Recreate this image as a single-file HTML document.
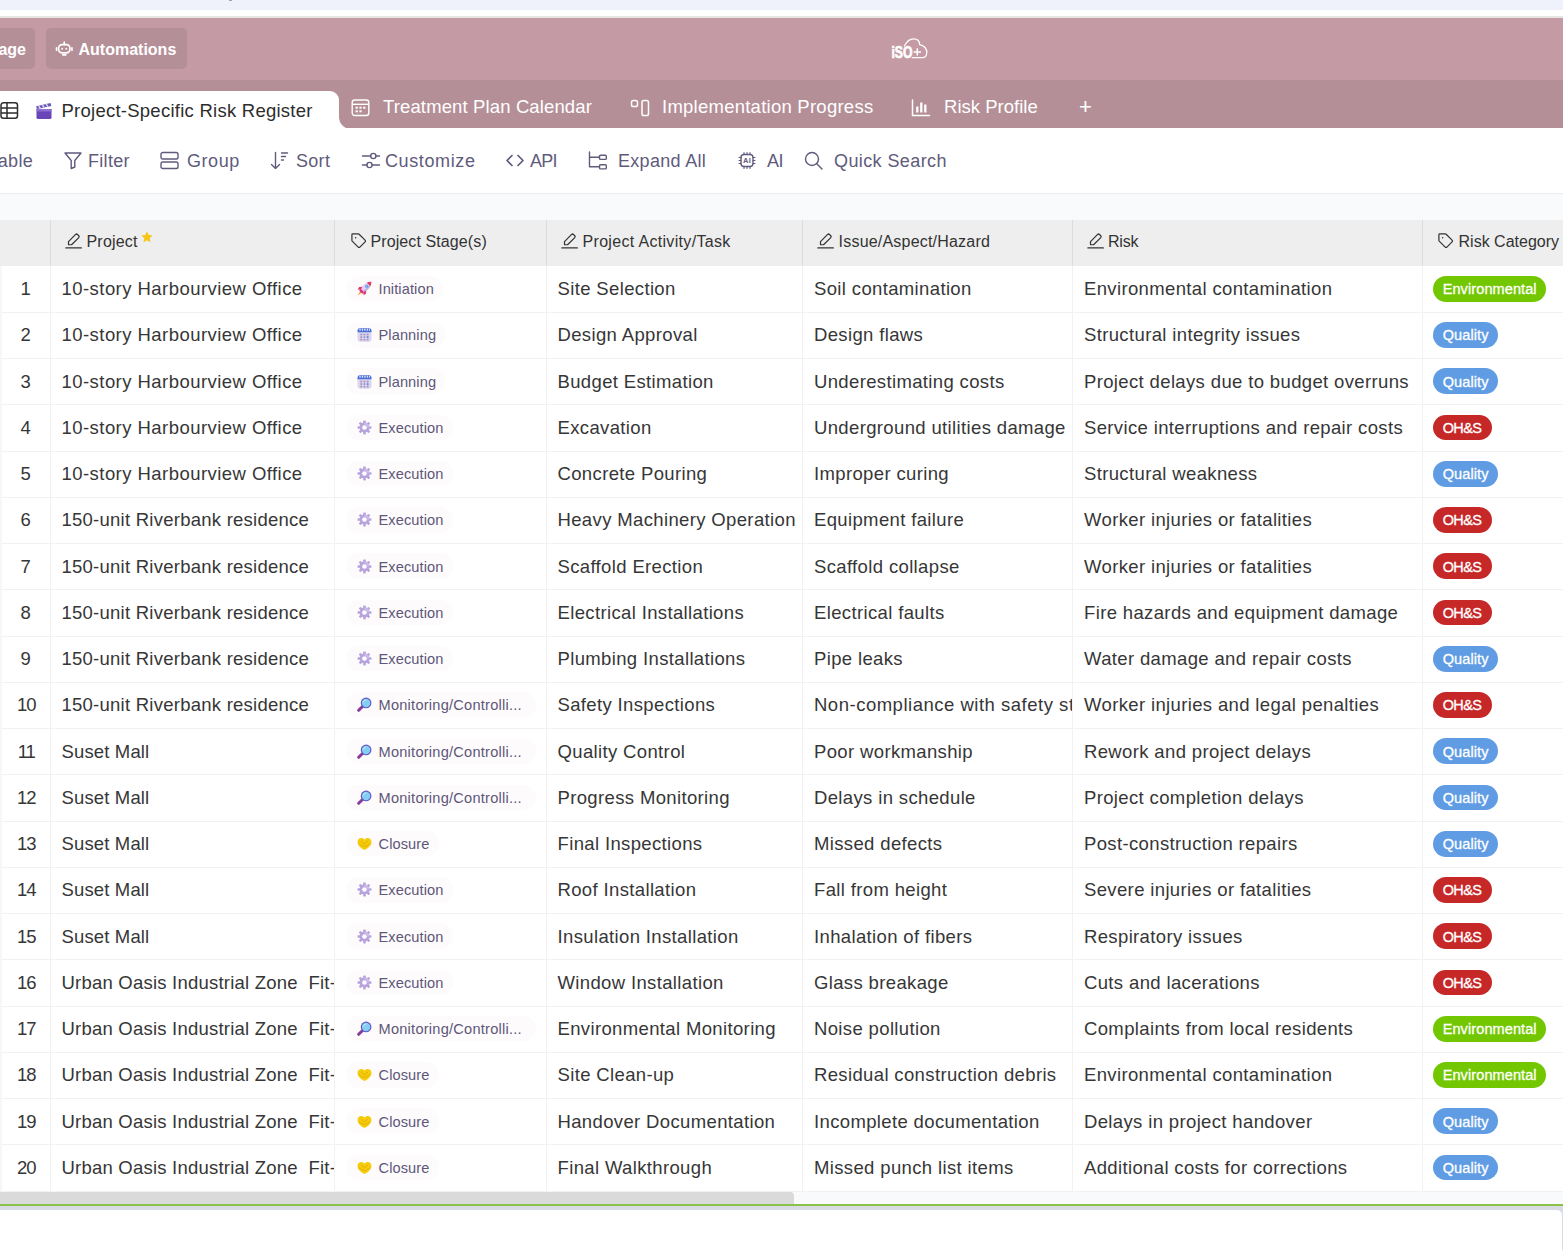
<!DOCTYPE html>
<html lang="en">
<head>
<meta charset="utf-8">
<title>Project-Specific Risk Register</title>
<style>
*{box-sizing:border-box;margin:0;padding:0}
html,body{width:1563px;height:1250px;overflow:hidden;background:#fff}
body{font-family:"Liberation Sans",sans-serif;color:#333;position:relative}
.abs{position:absolute}
/* top strips */
#strip{left:0;top:0;width:1563px;height:9.600px;background:#eff1fb}
#strip i{position:absolute;left:228.500px;top:0;width:3.500px;height:1px;background:#a3a3ad}
#gline{left:0;top:16px;width:1563px;height:2px;background:#e5e6e4}
/* header */
#hdr{left:0;top:18px;width:1563px;height:62px;background:#c49ba5}
.hbtn{position:absolute;top:10px;height:41px;padding-top:2.400px;background:#b58f98;border-radius:5px;color:#fff;font-weight:bold;font-size:16px;display:flex;align-items:center;white-space:nowrap}
#hb1{left:-20px;width:55px;justify-content:flex-end;padding-right:9px}
#hb2{left:46px;width:141px;padding-left:10px}
#hb2 svg{width:18.500px;height:18.500px;margin:-2.500px 5px 0 -1px;flex:none}
#logo{left:889px;top:19px;width:40px;height:24px}
/* tabs */
#tabs{left:0;top:80px;width:1563px;height:48px;background:#b58f98}
#tabact{left:-10px;top:11px;width:349px;height:40px;background:#fff;border-radius:0 9px 0 0}
#tabcurve{left:339px;top:37px;width:12px;height:12px;background:#fff}
#tabcurve i{position:absolute;left:0;top:-12px;width:24px;height:24px;border-radius:50%;background:#b58f98;display:block}
#tabcurve{overflow:hidden}
.tab{position:absolute;top:3px;height:48px;display:flex;align-items:center;color:#fff;font-size:18.500px;white-space:nowrap;letter-spacing:.25px}
.tab svg{flex:none}
#t0{color:#2d2d2d;top:6.700px}
/* toolbar */
#tb{left:0;top:128px;width:1563px;height:66px;background:#fff;border-bottom:1px solid #ececf0}
.ti{position:absolute;top:1.200px;height:65px;display:flex;align-items:center;color:#5f5b7c;font-size:18px;white-space:nowrap;letter-spacing:.3px}
.ti svg{position:relative;top:-1.200px;flex:none;stroke:#5f5b7c;fill:none;stroke-width:1.400;stroke-linecap:round;stroke-linejoin:round}
/* band */
#band{left:0;top:194px;width:1563px;height:26px;background:#f9fafc}
/* table */
#tbl{left:0;top:220px;width:1563px;height:971.500px;background:#fff;overflow:hidden}
.th{position:absolute;top:0;height:45.500px;background:#eeeeee;border-right:1px solid #dcdcdc;display:flex;align-items:center;font-size:16px;color:#333;white-space:nowrap;overflow:hidden;letter-spacing:.2px}
.th>span{position:relative;top:-.8px}
.th .hi{width:17px;height:17px;flex:none;margin-right:3px;position:relative;top:-2px}
.tr{position:relative;height:46.250px;width:1600px}
.tr::after{content:'';position:absolute;left:0;width:1600px;top:46.250px;height:1px;background:#f2f2f2}
.td{position:absolute;top:0;height:46.250px;border-right:1px solid #f2f2f2;display:flex;align-items:center;white-space:nowrap;overflow:hidden;font-size:18.500px;letter-spacing:.45px;color:#363636;padding-left:11px}
.c3,.c4,.c5{letter-spacing:.36px}
.c0,.c1,.c3,.c4,.c5{padding-top:.76px}
.c0{left:0;width:50.500px;border-left:2px solid #f6f7fa;justify-content:center;padding-left:0;letter-spacing:0}
.c0.dd{letter-spacing:-1px;padding-left:1px}
.c1{left:50.500px;width:284px}
.c2{left:334.500px;width:212px}
.c3{left:546.500px;width:256.500px}
.c4{left:803px;width:270px}
.c5{left:1073px;width:349.500px}
.c6{left:1422.500px;width:160px;border-right:0;padding-left:10.500px}
.pill{display:inline-flex;align-items:center;height:25.500px;border-radius:13px;background:#fdfbfc;padding:0 9px 0 11.500px;font-size:14.600px;color:#5d5779;letter-spacing:.1px;margin-left:0}
.pill.mon{letter-spacing:.24px;padding-right:14px}
.pill>span{position:relative;top:.5px}
.pill .em{width:15px;height:15px;margin-right:6.500px;flex:none}
.bdg{display:inline-flex;align-items:center;height:25.600px;border-radius:13px;position:relative;top:.1px;color:#fff;font-size:14.500px;padding:.8px 9.700px 0;letter-spacing:.1px;-webkit-text-stroke:.3px #fff}
.env{background:#73c700}
.qual{background:#5f9ce4}
.ohs{background:#c62828;letter-spacing:-.6px;padding-right:10.300px}
/* bottom */
#sbt{left:0;top:1191.500px;width:1563px;height:12.500px;background:#f9fafc}
#sbth{left:-10px;top:1192px;width:804px;height:12px;background:#dadada;border-radius:0 4px 0 0}
#grn{left:0;top:1204px;width:1563px;height:2.500px;background:#8bc34a}
#btm{left:0;top:1206.400px;width:1563px;height:50px;background:#d8dbe3}
#btm i{position:absolute;display:block;left:-10px;top:3.400px;width:1571.700px;height:60px;background:#fff;border-radius:5px}
</style>
</head>
<body>
<div id="strip" class="abs"><i></i></div>
<div id="gline" class="abs"></div>

<div id="hdr" class="abs">
  <div class="hbtn" id="hb1">age</div>
  <div class="hbtn" id="hb2"><svg viewBox="0 0 18 18" fill="none" stroke="#fff" stroke-width="1.600" stroke-linecap="round"><rect x="3.500" y="5.500" width="11" height="8" rx="3.500"/><path d="M9 5.500V3M1.500 8.500v2.500M16.500 8.500v2.500M7.500 15.500h3"/><circle cx="7" cy="9.500" r=".9" fill="#fff" stroke="none"/><circle cx="11" cy="9.500" r=".9" fill="#fff" stroke="none"/></svg>Automations</div>
  <svg id="logo" class="abs" viewBox="0 0 40 24"><text x="2.400" y="21" font-family="Liberation Sans, sans-serif" font-weight="bold" font-size="16.800" fill="#fff" stroke="#fff" stroke-width=".7" textLength="21" lengthAdjust="spacingAndGlyphs">iSO</text><path d="M15.500 8.800C17 5.800 19.800 1.900 24.500 1.900c4 0 6 2.600 6.200 5.700 4 1 7.100 3.900 7.100 8 0 3.400-2.300 5.100-4.300 5.100H23.300" fill="none" stroke="#fff" stroke-width="1.300" stroke-linecap="round"/><path d="M24.600 14.900h7.400M28.300 11.200v7.400" stroke="#fff" stroke-width="1.500" fill="none"/></svg>
</div>

<div id="tabs" class="abs">
  <div id="tabact" class="abs"></div>
  <div id="tabcurve" class="abs"><i></i></div>
  <div class="tab" id="t0" style="left:0">
    <svg width="19" height="19" viewBox="0 0 19 19" style="margin-left:0" fill="none" stroke="#2d2d2d" stroke-width="1.500"><rect x="1" y="1.800" width="16.500" height="15.500" rx="2.500"/><path d="M1 7h16.500M1 12h16.500M7 1.800v15.500"/></svg>
    <svg width="18" height="18" viewBox="0 0 18 18" style="margin-left:16px;margin-right:8.500px"><path d="M1.500 7h15v8.500a1.500 1.500 0 0 1-1.500 1.500H3a1.500 1.500 0 0 1-1.500-1.500z" fill="#6a45b8"/><path d="M1.200 4.200 15.600 1l.7 2.900L1.900 7.100z" fill="#6b55b5"/><path d="M3.600 3.700l1.600 2.600M7.400 2.800 9 5.500M11.200 2l1.600 2.700" stroke="#d9d0f0" stroke-width="1.500"/><path d="M1.500 7h15v2.500h-15z" fill="#8c6fd0"/></svg>
    <span>Project-Specific Risk Register</span>
  </div>
  <div class="tab" style="left:351px">
    <svg width="19" height="19" viewBox="0 0 19 19" fill="none" stroke="#fff" stroke-width="1.400" style="margin-right:13px"><rect x="1.200" y="2" width="16.600" height="15.500" rx="2.500"/><path d="M1.200 6.300h16.600"/><g fill="#fff" stroke="none"><rect x="4.600" y="8.700" width="2.200" height="2"/><rect x="8.400" y="8.700" width="2.200" height="2"/><rect x="12.200" y="8.700" width="2.200" height="2"/><rect x="4.600" y="12.300" width="2.200" height="2"/><rect x="8.400" y="12.300" width="2.200" height="2"/></g></svg>
    <span style="letter-spacing:.13px">Treatment Plan Calendar</span>
  </div>
  <div class="tab" style="left:630px">
    <svg width="20" height="19" viewBox="0 0 20 19" fill="none" stroke="#fff" stroke-width="1.500" style="margin-right:12px"><rect x="1.500" y="2.500" width="6" height="6" rx="1.800"/><rect x="12" y="2.500" width="6.500" height="15" rx="1.800"/></svg>
    <span>Implementation Progress</span>
  </div>
  <div class="tab" style="left:911px">
    <svg width="20" height="19" viewBox="0 0 20 19" fill="none" stroke="#fff" stroke-width="1.500" stroke-linecap="round" style="margin-right:13px"><path d="M1.500 2v15.500h17"/><path d="M6.300 14.500V8.500M10.300 14.500V4.500M14.300 14.500V6.500" stroke-width="2.300" stroke-linecap="butt"/></svg>
    <span style="letter-spacing:.02px">Risk Profile</span>
  </div>
  <div class="tab" style="left:1079px;font-size:22px"><span>+</span></div>
</div>

<div id="tb" class="abs">
  <div class="ti" style="left:-11.500px"><span>Table</span></div>
  <div class="ti" style="left:64px"><svg width="18" height="19" viewBox="0 0 18 19" style="margin-right:6px"><path d="M1 2h16l-6.200 7.500v6.500l-3.600 1.500V9.500z"/></svg><span>Filter</span></div>
  <div class="ti" style="left:160px"><svg width="19" height="19" viewBox="0 0 19 19" style="margin-right:8px"><rect x="1" y="1.500" width="17" height="6.500" rx="1.800"/><rect x="1" y="11" width="17" height="6.500" rx="1.800"/></svg><span style="letter-spacing:.55px">Group</span></div>
  <div class="ti" style="left:270px"><svg width="19" height="19" viewBox="0 0 19 19" style="margin-right:7px"><path d="M5.500 1.500v16M1.500 13.500l4 4 4-4M11.500 2h6M11.500 5.500h4M11.500 9h2"/></svg><span>Sort</span></div>
  <div class="ti" style="left:361px"><svg width="20" height="19" viewBox="0 0 20 19" style="margin-right:4px"><path d="M1.500 5h8M15 5h3.500M1.500 14h4.500M11 14h7.500"/><circle cx="12.300" cy="5" r="2.600"/><circle cx="8.500" cy="14" r="2.600"/></svg><span style="letter-spacing:.62px">Customize</span></div>
  <div class="ti" style="left:505px"><svg width="20" height="19" viewBox="0 0 20 19" style="margin-right:5px"><path d="M7 4.500 2 9.500l5 5M13 4.500l5 5-5 5" stroke-width="1.700"/></svg><span style="letter-spacing:-.8px">API</span></div>
  <div class="ti" style="left:588px"><svg width="20" height="19" viewBox="0 0 20 19" style="margin-right:10px"><path d="M1.500 1v14.800h10M1.500 6.300h10"/><rect x="11.500" y="4.200" width="6.800" height="4.200" rx="1"/><rect x="11.500" y="13.700" width="6.800" height="4.200" rx="1"/></svg><span>Expand All</span></div>
  <div class="ti" style="left:738px"><svg width="18" height="19" viewBox="0 0 18 19" style="margin-right:11px"><rect x="3" y="3.500" width="12" height="12" rx="3"/><path d="M6 1.500v2M9 1.500v2M12 1.500v2M6 15.500v2M9 15.500v2M12 15.500v2M1 6.500h2M1 9.500h2M1 12.500h2M15 6.500h2M15 9.500h2M15 12.500h2" stroke-width="1.100"/><text x="9" y="12.200" text-anchor="middle" font-family="Liberation Sans, sans-serif" font-size="7.500" font-weight="bold" fill="#5f5b7c" stroke="none">AI</text></svg><span style="letter-spacing:-.5px">AI</span></div>
  <div class="ti" style="left:804px"><svg width="19" height="19" viewBox="0 0 19 19" style="margin-right:11px"><circle cx="8" cy="8" r="6.500"/><path d="M13 13l5 5"/></svg><span style="letter-spacing:.4px">Quick Search</span></div>
</div>

<div id="band" class="abs"></div>

<div id="tbl" class="abs">
  <div class="th" style="left:0;width:50.500px"></div>
  <div class="th" style="left:50.500px;width:284px;padding-left:14.500px"><svg class="hi" viewBox="0 0 16 16" fill="none" stroke="#333" stroke-width="1.150" stroke-linejoin="round" stroke-linecap="round"><path d="M10 2.300a1.250 1.250 0 0 1 1.750 0l1.200 1.200a1.250 1.250 0 0 1 0 1.750L6.200 12H3.300V9.100z"/><path d="M.8 15h14.600"/></svg><span style="margin-left:1.500px">Project</span><svg viewBox="0 0 12 12" width="12" height="12" style="margin:-12px 0 0 3px"><path d="M6 .5l1.700 3.600 3.900.5-2.900 2.700.8 3.900L6 9.300 2.500 11.200l.8-3.900L.4 4.600l3.900-.5z" fill="#f5c518"/></svg></div>
  <div class="th" style="left:334.500px;width:212px;padding-left:15px"><svg class="hi" viewBox="0 0 16 16" fill="none" stroke="#333" stroke-width="1.150" stroke-linejoin="round" stroke-linecap="round"><path d="M1.800 2.600a.8.800 0 0 1 .8-.8h5.200c.3 0 .6.100.8.300l5.600 5.600a1.100 1.100 0 0 1 0 1.600l-4.900 4.900a1.100 1.100 0 0 1-1.600 0L2.100 8.600a1.100 1.100 0 0 1-.3-.8z"/><circle cx="5.300" cy="5.300" r=".7" fill="#333" stroke="none"/></svg><span style="margin-left:1px;letter-spacing:.1px">Project Stage(s)</span></div>
  <div class="th" style="left:546.500px;width:256.500px;padding-left:14px"><svg class="hi" viewBox="0 0 16 16" fill="none" stroke="#333" stroke-width="1.150" stroke-linejoin="round" stroke-linecap="round"><path d="M10 2.300a1.250 1.250 0 0 1 1.750 0l1.200 1.200a1.250 1.250 0 0 1 0 1.750L6.200 12H3.300V9.100z"/><path d="M.8 15h14.600"/></svg><span style="margin-left:2px;letter-spacing:.32px">Project Activity/Task</span></div>
  <div class="th" style="left:803px;width:270px;padding-left:14px"><svg class="hi" viewBox="0 0 16 16" fill="none" stroke="#333" stroke-width="1.150" stroke-linejoin="round" stroke-linecap="round"><path d="M10 2.300a1.250 1.250 0 0 1 1.750 0l1.200 1.200a1.250 1.250 0 0 1 0 1.750L6.200 12H3.300V9.100z"/><path d="M.8 15h14.600"/></svg><span style="margin-left:1.600px">Issue/Aspect/Hazard</span></div>
  <div class="th" style="left:1073px;width:349.500px;padding-left:14px"><svg class="hi" viewBox="0 0 16 16" fill="none" stroke="#333" stroke-width="1.150" stroke-linejoin="round" stroke-linecap="round"><path d="M10 2.300a1.250 1.250 0 0 1 1.750 0l1.200 1.200a1.250 1.250 0 0 1 0 1.750L6.200 12H3.300V9.100z"/><path d="M.8 15h14.600"/></svg><span style="margin-left:1px;letter-spacing:-.2px">Risk</span></div>
  <div class="th" style="left:1422.500px;width:160px;padding-left:14px;border-right:0"><svg class="hi" viewBox="0 0 16 16" fill="none" stroke="#333" stroke-width="1.150" stroke-linejoin="round" stroke-linecap="round"><path d="M1.800 2.600a.8.800 0 0 1 .8-.8h5.200c.3 0 .6.100.8.300l5.600 5.600a1.100 1.100 0 0 1 0 1.600l-4.900 4.900a1.100 1.100 0 0 1-1.600 0L2.100 8.600a1.100 1.100 0 0 1-.3-.8z"/><circle cx="5.300" cy="5.300" r=".7" fill="#333" stroke="none"/></svg><span style="margin-left:2px;letter-spacing:.01px">Risk Category</span></div>
  <div style="position:absolute;left:0;top:45.500px;width:1600px">
<div class="tr"><div class="td c0">1</div><div class="td c1"><span>10-story Harbourview Office</span></div><div class="td c2"><span class="pill"><svg class="em" viewBox="0 0 16 16"><path d="M3.400 11 .6 15.400l4.400-2.800z" fill="#f5a21c"/><path d="M4.200 8.300 7.700 11.800 5.600 13.700 2.300 10.400z" fill="#d9307a"/><path d="M15.200.8C11.200.6 6.700 3.300 4.200 8.300l3.500 3.500c5-2.500 7.700-7 7.500-11z" fill="#dcd2ee"/><path d="M15.200.8c.2 4-2.500 8.500-7.500 11l-1.300-1.300C11 8 13.900 4.600 15.200.8z" fill="#bfaede"/><path d="M15.200.8c-1.600-.1-3.200.3-4.700 1l3.700 3.700c.7-1.500 1.100-3.100 1-4.700z" fill="#e6395f"/><circle cx="10.400" cy="5.600" r="1.600" fill="#5b8def"/><circle cx="10.400" cy="5.600" r=".8" fill="#a9c6fa"/><path d="M5.700 6 2.300 6.500.7 9l3.500.3zM10 10.300 9.500 13.700 7 15.300 6.700 11.800z" fill="#e0357a"/></svg><span>Initiation</span></span></div><div class="td c3"><span>Site Selection</span></div><div class="td c4"><span>Soil contamination</span></div><div class="td c5"><span>Environmental contamination</span></div><div class="td c6"><span class="bdg env">Environmental</span></div></div>
<div class="tr"><div class="td c0">2</div><div class="td c1"><span>10-story Harbourview Office</span></div><div class="td c2"><span class="pill"><svg class="em" viewBox="0 0 16 16"><rect x=".6" y="1.200" width="14.800" height="14.400" rx="2.600" fill="#ddd5ee"/><path d="M.6 3.800a2.600 2.600 0 0 1 2.600-2.600h9.600a2.600 2.600 0 0 1 2.600 2.600v1.900H.6z" fill="#4b6fd9"/><g fill="#dfe6fb"><rect x="2.600" y="1.700" width="1.300" height="2.400" rx=".6"/><rect x="5.200" y="1.700" width="1.300" height="2.400" rx=".6"/><rect x="7.800" y="1.700" width="1.300" height="2.400" rx=".6"/><rect x="10.400" y="1.700" width="1.300" height="2.400" rx=".6"/><rect x="12.700" y="1.700" width="1.100" height="2.400" rx=".5"/></g><g fill="#9b8fb8"><rect x="3.600" y="7.200" width="1.900" height="1.700"/><rect x="7" y="7.200" width="1.900" height="1.700"/><rect x="10.400" y="7.200" width="1.900" height="1.700"/><rect x="3.600" y="9.900" width="1.900" height="1.700"/><rect x="7" y="9.900" width="1.900" height="1.700"/><rect x="3.600" y="12.600" width="1.900" height="1.700"/><rect x="7" y="12.600" width="1.900" height="1.700"/><rect x="10.400" y="12.600" width="1.900" height="1.700"/></g><rect x="10.400" y="9.900" width="1.900" height="1.700" fill="#4b7cf0"/></svg><span>Planning</span></span></div><div class="td c3"><span>Design Approval</span></div><div class="td c4"><span>Design flaws</span></div><div class="td c5"><span>Structural integrity issues</span></div><div class="td c6"><span class="bdg qual">Quality</span></div></div>
<div class="tr"><div class="td c0">3</div><div class="td c1"><span>10-story Harbourview Office</span></div><div class="td c2"><span class="pill"><svg class="em" viewBox="0 0 16 16"><rect x=".6" y="1.200" width="14.800" height="14.400" rx="2.600" fill="#ddd5ee"/><path d="M.6 3.800a2.600 2.600 0 0 1 2.600-2.600h9.600a2.600 2.600 0 0 1 2.600 2.600v1.900H.6z" fill="#4b6fd9"/><g fill="#dfe6fb"><rect x="2.600" y="1.700" width="1.300" height="2.400" rx=".6"/><rect x="5.200" y="1.700" width="1.300" height="2.400" rx=".6"/><rect x="7.800" y="1.700" width="1.300" height="2.400" rx=".6"/><rect x="10.400" y="1.700" width="1.300" height="2.400" rx=".6"/><rect x="12.700" y="1.700" width="1.100" height="2.400" rx=".5"/></g><g fill="#9b8fb8"><rect x="3.600" y="7.200" width="1.900" height="1.700"/><rect x="7" y="7.200" width="1.900" height="1.700"/><rect x="10.400" y="7.200" width="1.900" height="1.700"/><rect x="3.600" y="9.900" width="1.900" height="1.700"/><rect x="7" y="9.900" width="1.900" height="1.700"/><rect x="3.600" y="12.600" width="1.900" height="1.700"/><rect x="7" y="12.600" width="1.900" height="1.700"/><rect x="10.400" y="12.600" width="1.900" height="1.700"/></g><rect x="10.400" y="9.900" width="1.900" height="1.700" fill="#4b7cf0"/></svg><span>Planning</span></span></div><div class="td c3"><span>Budget Estimation</span></div><div class="td c4"><span>Underestimating costs</span></div><div class="td c5"><span>Project delays due to budget overruns</span></div><div class="td c6"><span class="bdg qual">Quality</span></div></div>
<div class="tr"><div class="td c0">4</div><div class="td c1"><span>10-story Harbourview Office</span></div><div class="td c2"><span class="pill"><svg class="em" viewBox="0 0 16 16"><g fill="#b8a3dd"><rect x="6.600" y=".6" width="2.800" height="14.800" rx=".7"/><rect x="6.600" y=".6" width="2.800" height="14.800" rx=".7" transform="rotate(45 8 8)"/><rect x="6.600" y=".6" width="2.800" height="14.800" rx=".7" transform="rotate(90 8 8)"/><rect x="6.600" y=".6" width="2.800" height="14.800" rx=".7" transform="rotate(135 8 8)"/><circle cx="8" cy="8" r="5.300"/></g><circle cx="8" cy="8" r="2.500" fill="#fff"/><path d="M8 2.700a5.300 5.300 0 0 1 5.300 5.300h-2.800A2.500 2.500 0 0 0 8 5.500z" fill="#cbbbe8"/></svg><span>Execution</span></span></div><div class="td c3"><span>Excavation</span></div><div class="td c4"><span>Underground utilities damage</span></div><div class="td c5"><span>Service interruptions and repair costs</span></div><div class="td c6"><span class="bdg ohs">OH&amp;S</span></div></div>
<div class="tr"><div class="td c0">5</div><div class="td c1"><span>10-story Harbourview Office</span></div><div class="td c2"><span class="pill"><svg class="em" viewBox="0 0 16 16"><g fill="#b8a3dd"><rect x="6.600" y=".6" width="2.800" height="14.800" rx=".7"/><rect x="6.600" y=".6" width="2.800" height="14.800" rx=".7" transform="rotate(45 8 8)"/><rect x="6.600" y=".6" width="2.800" height="14.800" rx=".7" transform="rotate(90 8 8)"/><rect x="6.600" y=".6" width="2.800" height="14.800" rx=".7" transform="rotate(135 8 8)"/><circle cx="8" cy="8" r="5.300"/></g><circle cx="8" cy="8" r="2.500" fill="#fff"/><path d="M8 2.700a5.300 5.300 0 0 1 5.300 5.300h-2.800A2.500 2.500 0 0 0 8 5.500z" fill="#cbbbe8"/></svg><span>Execution</span></span></div><div class="td c3"><span>Concrete Pouring</span></div><div class="td c4"><span>Improper curing</span></div><div class="td c5"><span>Structural weakness</span></div><div class="td c6"><span class="bdg qual">Quality</span></div></div>
<div class="tr"><div class="td c0">6</div><div class="td c1"><span style="letter-spacing:.25px">150-unit Riverbank residence</span></div><div class="td c2"><span class="pill"><svg class="em" viewBox="0 0 16 16"><g fill="#b8a3dd"><rect x="6.600" y=".6" width="2.800" height="14.800" rx=".7"/><rect x="6.600" y=".6" width="2.800" height="14.800" rx=".7" transform="rotate(45 8 8)"/><rect x="6.600" y=".6" width="2.800" height="14.800" rx=".7" transform="rotate(90 8 8)"/><rect x="6.600" y=".6" width="2.800" height="14.800" rx=".7" transform="rotate(135 8 8)"/><circle cx="8" cy="8" r="5.300"/></g><circle cx="8" cy="8" r="2.500" fill="#fff"/><path d="M8 2.700a5.300 5.300 0 0 1 5.300 5.300h-2.800A2.500 2.500 0 0 0 8 5.500z" fill="#cbbbe8"/></svg><span>Execution</span></span></div><div class="td c3"><span>Heavy Machinery Operation</span></div><div class="td c4"><span>Equipment failure</span></div><div class="td c5"><span>Worker injuries or fatalities</span></div><div class="td c6"><span class="bdg ohs">OH&amp;S</span></div></div>
<div class="tr"><div class="td c0">7</div><div class="td c1"><span style="letter-spacing:.25px">150-unit Riverbank residence</span></div><div class="td c2"><span class="pill"><svg class="em" viewBox="0 0 16 16"><g fill="#b8a3dd"><rect x="6.600" y=".6" width="2.800" height="14.800" rx=".7"/><rect x="6.600" y=".6" width="2.800" height="14.800" rx=".7" transform="rotate(45 8 8)"/><rect x="6.600" y=".6" width="2.800" height="14.800" rx=".7" transform="rotate(90 8 8)"/><rect x="6.600" y=".6" width="2.800" height="14.800" rx=".7" transform="rotate(135 8 8)"/><circle cx="8" cy="8" r="5.300"/></g><circle cx="8" cy="8" r="2.500" fill="#fff"/><path d="M8 2.700a5.300 5.300 0 0 1 5.300 5.300h-2.800A2.500 2.500 0 0 0 8 5.500z" fill="#cbbbe8"/></svg><span>Execution</span></span></div><div class="td c3"><span>Scaffold Erection</span></div><div class="td c4"><span>Scaffold collapse</span></div><div class="td c5"><span>Worker injuries or fatalities</span></div><div class="td c6"><span class="bdg ohs">OH&amp;S</span></div></div>
<div class="tr"><div class="td c0">8</div><div class="td c1"><span style="letter-spacing:.25px">150-unit Riverbank residence</span></div><div class="td c2"><span class="pill"><svg class="em" viewBox="0 0 16 16"><g fill="#b8a3dd"><rect x="6.600" y=".6" width="2.800" height="14.800" rx=".7"/><rect x="6.600" y=".6" width="2.800" height="14.800" rx=".7" transform="rotate(45 8 8)"/><rect x="6.600" y=".6" width="2.800" height="14.800" rx=".7" transform="rotate(90 8 8)"/><rect x="6.600" y=".6" width="2.800" height="14.800" rx=".7" transform="rotate(135 8 8)"/><circle cx="8" cy="8" r="5.300"/></g><circle cx="8" cy="8" r="2.500" fill="#fff"/><path d="M8 2.700a5.300 5.300 0 0 1 5.300 5.300h-2.800A2.500 2.500 0 0 0 8 5.500z" fill="#cbbbe8"/></svg><span>Execution</span></span></div><div class="td c3"><span>Electrical Installations</span></div><div class="td c4"><span>Electrical faults</span></div><div class="td c5"><span>Fire hazards and equipment damage</span></div><div class="td c6"><span class="bdg ohs">OH&amp;S</span></div></div>
<div class="tr"><div class="td c0">9</div><div class="td c1"><span style="letter-spacing:.25px">150-unit Riverbank residence</span></div><div class="td c2"><span class="pill"><svg class="em" viewBox="0 0 16 16"><g fill="#b8a3dd"><rect x="6.600" y=".6" width="2.800" height="14.800" rx=".7"/><rect x="6.600" y=".6" width="2.800" height="14.800" rx=".7" transform="rotate(45 8 8)"/><rect x="6.600" y=".6" width="2.800" height="14.800" rx=".7" transform="rotate(90 8 8)"/><rect x="6.600" y=".6" width="2.800" height="14.800" rx=".7" transform="rotate(135 8 8)"/><circle cx="8" cy="8" r="5.300"/></g><circle cx="8" cy="8" r="2.500" fill="#fff"/><path d="M8 2.700a5.300 5.300 0 0 1 5.300 5.300h-2.800A2.500 2.500 0 0 0 8 5.500z" fill="#cbbbe8"/></svg><span>Execution</span></span></div><div class="td c3"><span>Plumbing Installations</span></div><div class="td c4"><span>Pipe leaks</span></div><div class="td c5"><span>Water damage and repair costs</span></div><div class="td c6"><span class="bdg qual">Quality</span></div></div>
<div class="tr"><div class="td c0 dd">10</div><div class="td c1"><span style="letter-spacing:.25px">150-unit Riverbank residence</span></div><div class="td c2"><span class="pill mon"><svg class="em" viewBox="0 0 16 16"><path d="M5.600 10.400 1.800 14.200" stroke="#8a3a9c" stroke-width="3.200" stroke-linecap="round"/><circle cx="9.700" cy="6.300" r="5.700" fill="#5f57c4"/><circle cx="9.700" cy="6.300" r="4.500" fill="#86cdf3"/><path d="M6.600 5.500a3.300 3.300 0 0 1 2.800-2.400" stroke="#c6e9fb" stroke-width="1" fill="none" stroke-linecap="round"/></svg><span>Monitoring/Controlli...</span></span></div><div class="td c3"><span>Safety Inspections</span></div><div class="td c4"><span style="letter-spacing:.51px">Non-compliance with safety standards</span></div><div class="td c5"><span>Worker injuries and legal penalties</span></div><div class="td c6"><span class="bdg ohs">OH&amp;S</span></div></div>
<div class="tr"><div class="td c0 dd">11</div><div class="td c1"><span style="letter-spacing:.15px">Suset Mall</span></div><div class="td c2"><span class="pill mon"><svg class="em" viewBox="0 0 16 16"><path d="M5.600 10.400 1.800 14.200" stroke="#8a3a9c" stroke-width="3.200" stroke-linecap="round"/><circle cx="9.700" cy="6.300" r="5.700" fill="#5f57c4"/><circle cx="9.700" cy="6.300" r="4.500" fill="#86cdf3"/><path d="M6.600 5.500a3.300 3.300 0 0 1 2.800-2.400" stroke="#c6e9fb" stroke-width="1" fill="none" stroke-linecap="round"/></svg><span>Monitoring/Controlli...</span></span></div><div class="td c3"><span>Quality Control</span></div><div class="td c4"><span>Poor workmanship</span></div><div class="td c5"><span>Rework and project delays</span></div><div class="td c6"><span class="bdg qual">Quality</span></div></div>
<div class="tr"><div class="td c0 dd">12</div><div class="td c1"><span style="letter-spacing:.15px">Suset Mall</span></div><div class="td c2"><span class="pill mon"><svg class="em" viewBox="0 0 16 16"><path d="M5.600 10.400 1.800 14.200" stroke="#8a3a9c" stroke-width="3.200" stroke-linecap="round"/><circle cx="9.700" cy="6.300" r="5.700" fill="#5f57c4"/><circle cx="9.700" cy="6.300" r="4.500" fill="#86cdf3"/><path d="M6.600 5.500a3.300 3.300 0 0 1 2.800-2.400" stroke="#c6e9fb" stroke-width="1" fill="none" stroke-linecap="round"/></svg><span>Monitoring/Controlli...</span></span></div><div class="td c3"><span>Progress Monitoring</span></div><div class="td c4"><span>Delays in schedule</span></div><div class="td c5"><span>Project completion delays</span></div><div class="td c6"><span class="bdg qual">Quality</span></div></div>
<div class="tr"><div class="td c0 dd">13</div><div class="td c1"><span style="letter-spacing:.15px">Suset Mall</span></div><div class="td c2"><span class="pill"><svg class="em" viewBox="0 0 16 16"><path d="M8 14.800C3.800 12.800.6 9.900.6 6.300.6 3.700 2.400 2 4.600 2 6 2 7.200 2.700 8 3.800 8.800 2.700 10 2 11.400 2c2.200 0 4 1.700 4 4.300 0 3.600-3.200 6.500-7.400 8.500z" fill="#f5cc0c"/><path d="M2.500 8.200c1.700 2 3.600 2.900 5.500 2.900s3.800-.9 5.500-2.900M4.500 5.500 8 8.500l3.500-3" stroke="#e3aa00" stroke-width=".9" fill="none" stroke-linecap="round"/></svg><span>Closure</span></span></div><div class="td c3"><span>Final Inspections</span></div><div class="td c4"><span>Missed defects</span></div><div class="td c5"><span>Post-construction repairs</span></div><div class="td c6"><span class="bdg qual">Quality</span></div></div>
<div class="tr"><div class="td c0 dd">14</div><div class="td c1"><span style="letter-spacing:.15px">Suset Mall</span></div><div class="td c2"><span class="pill"><svg class="em" viewBox="0 0 16 16"><g fill="#b8a3dd"><rect x="6.600" y=".6" width="2.800" height="14.800" rx=".7"/><rect x="6.600" y=".6" width="2.800" height="14.800" rx=".7" transform="rotate(45 8 8)"/><rect x="6.600" y=".6" width="2.800" height="14.800" rx=".7" transform="rotate(90 8 8)"/><rect x="6.600" y=".6" width="2.800" height="14.800" rx=".7" transform="rotate(135 8 8)"/><circle cx="8" cy="8" r="5.300"/></g><circle cx="8" cy="8" r="2.500" fill="#fff"/><path d="M8 2.700a5.300 5.300 0 0 1 5.300 5.300h-2.800A2.500 2.500 0 0 0 8 5.500z" fill="#cbbbe8"/></svg><span>Execution</span></span></div><div class="td c3"><span>Roof Installation</span></div><div class="td c4"><span>Fall from height</span></div><div class="td c5"><span>Severe injuries or fatalities</span></div><div class="td c6"><span class="bdg ohs">OH&amp;S</span></div></div>
<div class="tr"><div class="td c0 dd">15</div><div class="td c1"><span style="letter-spacing:.15px">Suset Mall</span></div><div class="td c2"><span class="pill"><svg class="em" viewBox="0 0 16 16"><g fill="#b8a3dd"><rect x="6.600" y=".6" width="2.800" height="14.800" rx=".7"/><rect x="6.600" y=".6" width="2.800" height="14.800" rx=".7" transform="rotate(45 8 8)"/><rect x="6.600" y=".6" width="2.800" height="14.800" rx=".7" transform="rotate(90 8 8)"/><rect x="6.600" y=".6" width="2.800" height="14.800" rx=".7" transform="rotate(135 8 8)"/><circle cx="8" cy="8" r="5.300"/></g><circle cx="8" cy="8" r="2.500" fill="#fff"/><path d="M8 2.700a5.300 5.300 0 0 1 5.300 5.300h-2.800A2.500 2.500 0 0 0 8 5.500z" fill="#cbbbe8"/></svg><span>Execution</span></span></div><div class="td c3"><span>Insulation Installation</span></div><div class="td c4"><span>Inhalation of fibers</span></div><div class="td c5"><span>Respiratory issues</span></div><div class="td c6"><span class="bdg ohs">OH&amp;S</span></div></div>
<div class="tr"><div class="td c0 dd">16</div><div class="td c1"><span style="letter-spacing:.22px">Urban Oasis Industrial Zone&nbsp; Fit-out</span></div><div class="td c2"><span class="pill"><svg class="em" viewBox="0 0 16 16"><g fill="#b8a3dd"><rect x="6.600" y=".6" width="2.800" height="14.800" rx=".7"/><rect x="6.600" y=".6" width="2.800" height="14.800" rx=".7" transform="rotate(45 8 8)"/><rect x="6.600" y=".6" width="2.800" height="14.800" rx=".7" transform="rotate(90 8 8)"/><rect x="6.600" y=".6" width="2.800" height="14.800" rx=".7" transform="rotate(135 8 8)"/><circle cx="8" cy="8" r="5.300"/></g><circle cx="8" cy="8" r="2.500" fill="#fff"/><path d="M8 2.700a5.300 5.300 0 0 1 5.300 5.300h-2.800A2.500 2.500 0 0 0 8 5.500z" fill="#cbbbe8"/></svg><span>Execution</span></span></div><div class="td c3"><span>Window Installation</span></div><div class="td c4"><span>Glass breakage</span></div><div class="td c5"><span>Cuts and lacerations</span></div><div class="td c6"><span class="bdg ohs">OH&amp;S</span></div></div>
<div class="tr"><div class="td c0 dd">17</div><div class="td c1"><span style="letter-spacing:.22px">Urban Oasis Industrial Zone&nbsp; Fit-out</span></div><div class="td c2"><span class="pill mon"><svg class="em" viewBox="0 0 16 16"><path d="M5.600 10.400 1.800 14.200" stroke="#8a3a9c" stroke-width="3.200" stroke-linecap="round"/><circle cx="9.700" cy="6.300" r="5.700" fill="#5f57c4"/><circle cx="9.700" cy="6.300" r="4.500" fill="#86cdf3"/><path d="M6.600 5.500a3.300 3.300 0 0 1 2.800-2.400" stroke="#c6e9fb" stroke-width="1" fill="none" stroke-linecap="round"/></svg><span>Monitoring/Controlli...</span></span></div><div class="td c3"><span>Environmental Monitoring</span></div><div class="td c4"><span>Noise pollution</span></div><div class="td c5"><span>Complaints from local residents</span></div><div class="td c6"><span class="bdg env">Environmental</span></div></div>
<div class="tr"><div class="td c0 dd">18</div><div class="td c1"><span style="letter-spacing:.22px">Urban Oasis Industrial Zone&nbsp; Fit-out</span></div><div class="td c2"><span class="pill"><svg class="em" viewBox="0 0 16 16"><path d="M8 14.800C3.800 12.800.6 9.900.6 6.300.6 3.700 2.400 2 4.600 2 6 2 7.200 2.700 8 3.800 8.800 2.700 10 2 11.400 2c2.200 0 4 1.700 4 4.300 0 3.600-3.200 6.500-7.400 8.500z" fill="#f5cc0c"/><path d="M2.500 8.200c1.700 2 3.600 2.900 5.500 2.900s3.800-.9 5.500-2.900M4.500 5.500 8 8.500l3.500-3" stroke="#e3aa00" stroke-width=".9" fill="none" stroke-linecap="round"/></svg><span>Closure</span></span></div><div class="td c3"><span>Site Clean-up</span></div><div class="td c4"><span>Residual construction debris</span></div><div class="td c5"><span>Environmental contamination</span></div><div class="td c6"><span class="bdg env">Environmental</span></div></div>
<div class="tr"><div class="td c0 dd">19</div><div class="td c1"><span style="letter-spacing:.22px">Urban Oasis Industrial Zone&nbsp; Fit-out</span></div><div class="td c2"><span class="pill"><svg class="em" viewBox="0 0 16 16"><path d="M8 14.800C3.800 12.800.6 9.900.6 6.300.6 3.700 2.400 2 4.600 2 6 2 7.200 2.700 8 3.800 8.800 2.700 10 2 11.400 2c2.200 0 4 1.700 4 4.300 0 3.600-3.200 6.500-7.400 8.500z" fill="#f5cc0c"/><path d="M2.500 8.200c1.700 2 3.600 2.900 5.500 2.900s3.800-.9 5.500-2.900M4.500 5.500 8 8.500l3.500-3" stroke="#e3aa00" stroke-width=".9" fill="none" stroke-linecap="round"/></svg><span>Closure</span></span></div><div class="td c3"><span>Handover Documentation</span></div><div class="td c4"><span>Incomplete documentation</span></div><div class="td c5"><span>Delays in project handover</span></div><div class="td c6"><span class="bdg qual">Quality</span></div></div>
<div class="tr"><div class="td c0 dd">20</div><div class="td c1"><span style="letter-spacing:.22px">Urban Oasis Industrial Zone&nbsp; Fit-out</span></div><div class="td c2"><span class="pill"><svg class="em" viewBox="0 0 16 16"><path d="M8 14.800C3.800 12.800.6 9.900.6 6.300.6 3.700 2.400 2 4.600 2 6 2 7.200 2.700 8 3.800 8.800 2.700 10 2 11.400 2c2.200 0 4 1.700 4 4.300 0 3.600-3.200 6.500-7.400 8.500z" fill="#f5cc0c"/><path d="M2.500 8.200c1.700 2 3.600 2.900 5.500 2.900s3.800-.9 5.500-2.900M4.500 5.500 8 8.500l3.500-3" stroke="#e3aa00" stroke-width=".9" fill="none" stroke-linecap="round"/></svg><span>Closure</span></span></div><div class="td c3"><span>Final Walkthrough</span></div><div class="td c4"><span>Missed punch list items</span></div><div class="td c5"><span>Additional costs for corrections</span></div><div class="td c6"><span class="bdg qual">Quality</span></div></div>
  </div>
</div>

<div id="sbt" class="abs"></div>
<div id="sbth" class="abs"></div>
<div id="grn" class="abs"></div>
<div id="btm" class="abs"><i></i></div>
</body>
</html>
